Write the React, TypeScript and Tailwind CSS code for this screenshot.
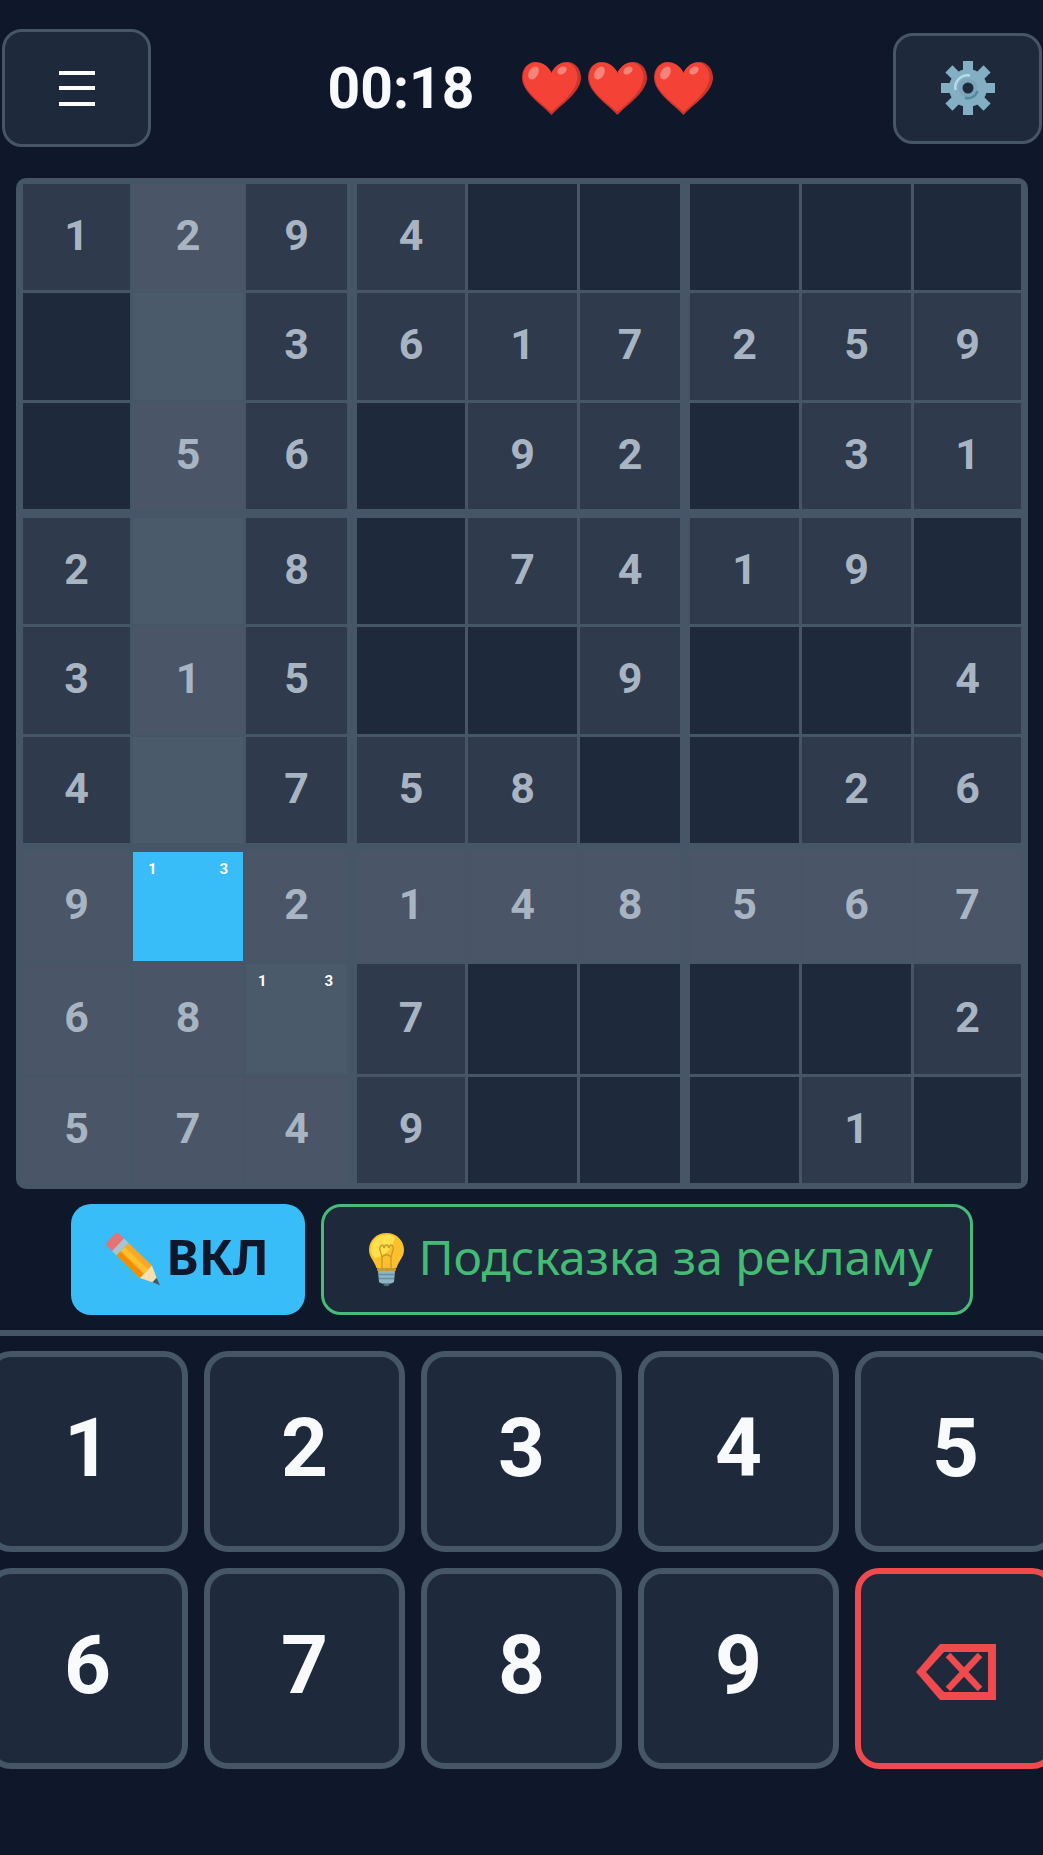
const BOARD = [
  ['1', '2', '9', '4', '', '', '', '', ''],
  ['', '', '3', '6', '1', '7', '2', '5', '9'],
  ['', '5', '6', '', '9', '2', '', '3', '1'],
  ['2', '', '8', '', '7', '4', '1', '9', ''],
  ['3', '1', '5', '', '', '9', '', '', '4'],
  ['4', '', '7', '5', '8', '', '', '2', '6'],
  ['9', '', '2', '1', '4', '8', '5', '6', '7'],
  ['6', '8', '', '7', '', '', '', '', '2'],
  ['5', '7', '4', '9', '', '', '', '1', ''],
]

const SEL_ROW = 6
const SEL_COL = 1

const Heart = () => (
  <svg width="59" height="53" viewBox="0 0 59 53">
    <path d="M29.5 11C26 3 19 0 13.500 0C5.500 0 0 7 0 15.500C0 30 18 41 29.500 53C41 41 59 30 59 15.500C59 7 53 0 45.500 0C40 0 33 3 29.500 11Z" fill="#c9352c" />
    <path d="M29.500 11C26 3 19 0.500 13.500 0.500C6 0.500 1 7 1 15C1 29 18.500 40 29.500 50C39 41 55.500 29 55.500 14.500C55.500 7 50 0.500 44 0.500C39 0.500 33 3 29.500 11Z" fill="#f44336" />
    <ellipse cx="11.500" cy="11" rx="4.500" ry="7" transform="rotate(32 11.500 11)" fill="#f88379" />
    <ellipse cx="40" cy="8.500" rx="5" ry="3.500" transform="rotate(-32 40 8.500)" fill="#f88379" />
  </svg>
)

const Gear = () => (
  <svg width="54" height="54" viewBox="-27 -27 54 54">
    {[0, 45, 90, 135, 180, 225, 270, 315].map((a) => (
      <rect key={a} x="-5" y="-27" width="10" height="14" fill="#84aec3" transform={`rotate(${a})`} />
    ))}
    <circle r="19" fill="#84aec3" />
    <path d="M-12.500 2A12.500 12.500 0 0 1 2 -12.500" fill="none" stroke="#b5dce8" strokeWidth="2.500" />
    <circle r="9.500" fill="#7ba6bc" />
    <path d="M9.500 3A10 10 0 0 1 -3 9.800" fill="none" stroke="#4f8aa3" strokeWidth="2.500" />
    <circle r="5.500" fill="#1e293b" />
  </svg>
)

const Pencil = () => (
  <svg width="56" height="54" viewBox="0 0 56 54">
    <g transform="translate(5 5) rotate(44) scale(1.08)">
      <rect x="0" y="-8" width="10" height="16" rx="3" fill="#e57373" />
      <rect x="9" y="-8" width="6" height="16" fill="#a9c4cf" />
      <rect x="15" y="-8" width="30" height="16" fill="#f9a825" />
      <rect x="15" y="-3" width="30" height="5" fill="#fbc02d" />
      <rect x="15" y="3" width="30" height="5" fill="#ef8f00" />
      <path d="M45 -8L62 0L45 8Z" fill="#f6dfb1" />
      <path d="M56 -2.800L63 0L56 2.800Z" fill="#4b5563" />
    </g>
  </svg>
)

const Bulb = () => (
  <svg width="35" height="53" viewBox="0 0 35 53">
    <path d="M17.500 0C7.500 0 0 7.500 0 17C0 24 5 27.500 7.500 35H27.500C30 27.500 35 24 35 17C35 7.500 27.500 0 17.500 0Z" fill="#fbc02d" />
    <path d="M17.500 1.500C9 1.500 2 8 2 16C2 20 3.500 22 6 25C14 24 24 16 26 4C23.500 2.500 20.500 1.500 17.500 1.500Z" fill="#ffe14d" />
    <path d="M13 35V24L10.500 15M22 35V24L24.500 15M13 24C16 21 19 21 22 24M10.500 15C12.500 11 14 11 15 15M15 15C16 11 19 11 20 15M20 15C21 11 23 11 24.500 15" fill="none" stroke="#c9982c" strokeWidth="1.300" />
    <rect x="8" y="35" width="19" height="3" rx="1" fill="#c9982c" />
    <path d="M9 38H26L25 49C23 51.500 12 51.500 10 49Z" fill="#8fb4c4" />
    <path d="M9.500 41.500H25.500M10 45.500H25" stroke="#5f8ea3" strokeWidth="1.600" />
    <path d="M14 50.500H21L19.500 53H15.500Z" fill="#546e7a" />
  </svg>
)

const BackspaceIcon = () => (
  <svg width="80" height="56" viewBox="0 0 80 56">
    <path fillRule="evenodd" d="M0 28L24 0H80V56H24ZM10 28L28 8H72V48H28Z" fill="#ef4b4f" />
    <path d="M32 11L64 45M64 11L32 45" stroke="#ef4b4f" strokeWidth="6.500" fill="none" />
  </svg>
)

const Cell = ({ row, col, value }: { row: number; col: number; value: string }) => {
  const selected = row === SEL_ROW && col === SEL_COL
  const noted = row === 7 && col === 2
  const inBox = row >= 6 && col <= 2
  const related = row === SEL_ROW || col === SEL_COL || inBox

  let bg = value ? 'bg-[#2f3a4d]' : 'bg-[#1e293b]'
  if (related) bg = value ? 'bg-[#4a5568]' : 'bg-[#4a5a6a]'
  if (selected) bg = 'bg-[#38bdf8]'

  const borderR = col === 2 || col === 5 ? 'border-r-[7px]' : ''
  const borderB = row === 2 || row === 5 ? 'border-b-[6px]' : ''

  return (
    <div className={`flex min-w-0 border-[#475569] ${bg} ${borderR} ${borderB}`}>
      {selected || noted ? (
        <div className={`flex h-fit w-full justify-between pt-[9px] text-[15px] leading-[16px] font-bold text-white ${selected ? 'px-[15px]' : 'pr-[14px] pl-[12px]'}`}>
          <span>1</span>
          <span>3</span>
        </div>
      ) : (
        <span className="flex w-full items-center justify-center pb-[4px] text-[43px] leading-none font-bold text-[#a9b4c2]">
          {value}
        </span>
      )}
    </div>
  )
}

const KeypadButton = ({ children, danger }: { children: React.ReactNode; danger?: boolean }) => (
  <button
    type="button"
    className={`flex h-[201px] items-center justify-center rounded-[24px] border-[6px] bg-[#1e293b] text-[82px] leading-none font-bold text-[#f8fafc] ${danger ? 'border-[#ef4b4f] pt-[7px]' : 'border-[#475569] pb-[7px]'}`}
  >
    {children}
  </button>
)

export default function App() {
  return (
    <div className="min-h-[1855px] overflow-hidden bg-[#0f172a] font-['Roboto',sans-serif]">
      {/* Header */}
      <div className="flex items-center justify-between pt-[29px] pr-[1px] pl-[2px]">
        <button
          type="button"
          className="flex h-[118px] w-[149px] flex-col items-center justify-center gap-[11.500px] rounded-[20px] border-[3px] border-[#475569] bg-[#1e293b]"
        >
          <span className="h-[4px] w-[36px] bg-white" />
          <span className="h-[4px] w-[36px] bg-white" />
          <span className="h-[4px] w-[36px] bg-white" />
        </button>
        <div className="mr-[3px] flex items-center gap-[48px]">
          <span className="text-[57px] leading-none font-bold text-[#f8fafc]">00:18</span>
          <div className="flex gap-[7px]">
            <Heart />
            <Heart />
            <Heart />
          </div>
        </div>
        <button
          type="button"
          className="flex h-[111px] w-[149px] items-center justify-center rounded-[20px] border-[3px] border-[#475569] bg-[#1e293b]"
        >
          <Gear />
        </button>
      </div>

      {/* Board */}
      <div className="mt-[31px] ml-[16px] w-[1012px] rounded-[10px] bg-[#475569] px-[7px] py-[6px]">
        <div className="grid grid-cols-[107px_110px_108px_108px_109px_107px_109px_109px_107px] grid-rows-[106px_107px_112px_106px_107px_112px_109px_110px_106px] gap-[3px]">
          {BOARD.map((cells, row) =>
            cells.map((value, col) => <Cell key={`${row}-${col}`} row={row} col={col} value={value} />)
          )}
        </div>
      </div>

      {/* Actions */}
      <div className="mt-[15px] flex justify-center gap-[16px]">
        <button
          type="button"
          className="flex h-[111px] w-[234px] items-center justify-center gap-[4px] rounded-[20px] bg-[#38bdf8] text-[49px] font-bold text-[#0f172a] font-['Noto_Sans',sans-serif]"
        >
          <Pencil />
          <span className="pb-[6px]">ВКЛ</span>
        </button>
        <button
          type="button"
          className="flex h-[111px] w-[652px] items-center justify-center gap-[14px] rounded-[20px] border-[3px] border-[#48bb78] bg-[#1e293b] pl-[9px] text-[48px] text-[#43bb72] font-['Noto_Sans',sans-serif]"
        >
          <Bulb />
          <span className="pb-[5px]">Подсказка за рекламу</span>
        </button>
      </div>

      <div className="mt-[15px] h-[6px] bg-[#475569]" />

      {/* Keypad */}
      <div className="mt-[15px] -ml-[13px] grid w-[1071px] grid-cols-[repeat(5,201px)] gap-[16px]">
        {['1', '2', '3', '4', '5', '6', '7', '8', '9'].map((digit) => (
          <KeypadButton key={digit}>{digit}</KeypadButton>
        ))}
        <KeypadButton danger>
          <BackspaceIcon />
        </KeypadButton>
      </div>
    </div>
  )
}
